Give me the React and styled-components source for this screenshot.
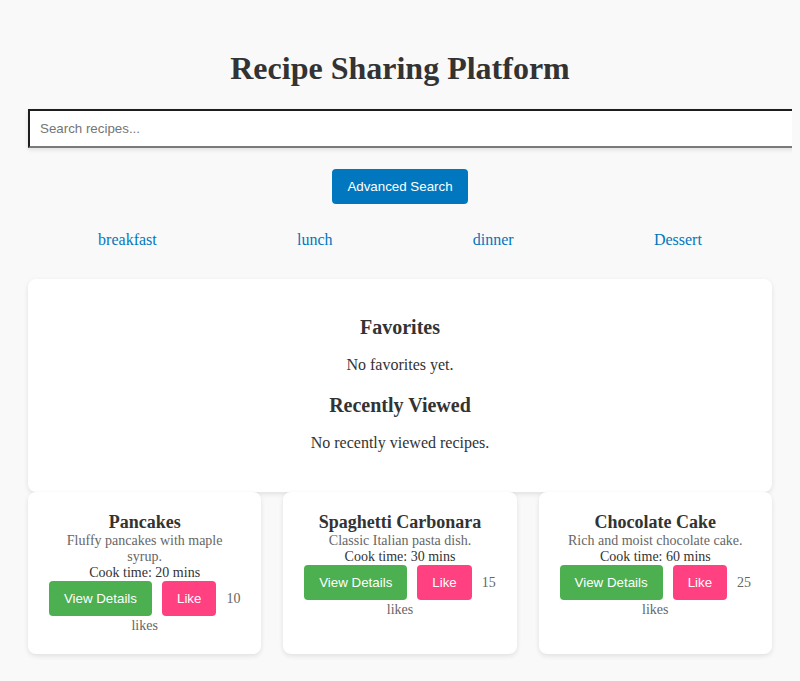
import React from 'react';
import styled, { createGlobalStyle } from 'styled-components';

const GlobalStyle = createGlobalStyle`
  body {
    margin: 8px;
    background: #f9f9f9;
    font-family: "Liberation Serif", "Times New Roman", serif;
    color: #333;
  }
`;

const Page = styled.div`
  padding: 20px;
`;

const Title = styled.h1`
  font-size: 32px;
  font-weight: 700;
  text-align: center;
  margin: 22px 0 22px;
`;

const SearchInput = styled.input`
  display: block;
  width: 100%;
  padding: 10px;
  margin: 0 0 21px;
  font-family: "Liberation Sans", Arial, sans-serif;
  font-size: 13.33px;
  line-height: 15px;
  background: #fff;
  border-style: solid;
  border-width: 2px;
  border-color: #1e1e1e #7a7a7a #7a7a7a #1e1e1e;
  box-shadow: 0 2px 4px rgba(0, 0, 0, 0.1);
  outline: none;

  &::placeholder {
    color: #757575;
  }
`;

const Center = styled.div`
  text-align: center;
`;

const Button = styled.button`
  display: inline-block;
  padding: 10px 15px;
  border: none;
  border-radius: 4px;
  font-family: "Liberation Sans", Arial, sans-serif;
  font-size: 13.33px;
  line-height: 15.33px;
  color: #fff;
  background: ${(p) => p.$bg || '#0077be'};
  cursor: pointer;
  vertical-align: baseline;
`;

const CardButton = styled(Button)`
  margin-right: 10px;
`;

const Categories = styled.nav`
  display: flex;
  justify-content: space-around;
  margin: 27px 0 30px;
`;

const CategoryLink = styled.a`
  color: #0077be;
  font-size: 16px;
  text-decoration: none;
  cursor: pointer;
`;

const Panel = styled.div`
  background: #fff;
  padding: 20px;
  border-radius: 8px;
  box-shadow: 0 2px 5px rgba(0, 0, 0, 0.1);
  text-align: center;
`;

const Section = styled.div`
  margin-bottom: 20px;
`;

const SectionTitle = styled.h2`
  font-size: 20px;
  margin: 16.6px 0;
`;

const SectionText = styled.p`
  font-size: 16px;
  margin: 17px 0 ${(p) => (p.$last ? '15px' : '16px')};
`;

const Grid = styled.div`
  display: grid;
  grid-template-columns: repeat(3, 1fr);
  gap: 22px;
`;

const Card = styled.div`
  background: #fff;
  padding: 20px;
  border-radius: 8px;
  box-shadow: 0 2px 5px rgba(0, 0, 0, 0.1);
  text-align: center;
`;

const CardTitle = styled.h3`
  font-size: 18px;
  margin: 0;
`;

const CardText = styled.p`
  font-size: 14px;
  margin: 0;
  padding: 0 ${(p) => (p.$muted ? '6px' : '0')};
  color: ${(p) => (p.$muted ? '#666' : '#333')};
`;

const Likes = styled.span`
  font-size: 14px;
  color: #666;
`;

const categories = ['breakfast', 'lunch', 'dinner', 'Dessert'];

const recipes = [
  { id: 1, title: 'Pancakes', description: 'Fluffy pancakes with maple syrup.', cookTime: 20, likes: 10 },
  { id: 2, title: 'Spaghetti Carbonara', description: 'Classic Italian pasta dish.', cookTime: 30, likes: 15 },
  { id: 3, title: 'Chocolate Cake', description: 'Rich and moist chocolate cake.', cookTime: 60, likes: 25 },
];

function RecipeCard({ recipe }) {
  return (
    <Card>
      <CardTitle>{recipe.title}</CardTitle>
      <CardText $muted>{recipe.description}</CardText>
      <CardText>Cook time: {recipe.cookTime} mins</CardText>
      <div>
        <CardButton $bg="#4caf50">View Details</CardButton>
        <CardButton $bg="#ff4081">Like</CardButton>
        <Likes>{recipe.likes} likes</Likes>
      </div>
    </Card>
  );
}

export default function App() {
  return (
    <>
      <GlobalStyle />
      <Page>
        <Title>Recipe Sharing Platform</Title>
        <SearchInput type="text" placeholder="Search recipes..." />
        <Center>
          <Button>Advanced Search</Button>
        </Center>
        <Categories>
          {categories.map((c) => (
            <CategoryLink key={c}>{c}</CategoryLink>
          ))}
        </Categories>
        <Panel>
          <Section>
            <SectionTitle>Favorites</SectionTitle>
            <SectionText>No favorites yet.</SectionText>
          </Section>
          <Section>
            <SectionTitle>Recently Viewed</SectionTitle>
            <SectionText $last>No recently viewed recipes.</SectionText>
          </Section>
        </Panel>
        <Grid>
          {recipes.map((r) => (
            <RecipeCard key={r.id} recipe={r} />
          ))}
        </Grid>
      </Page>
    </>
  );
}
